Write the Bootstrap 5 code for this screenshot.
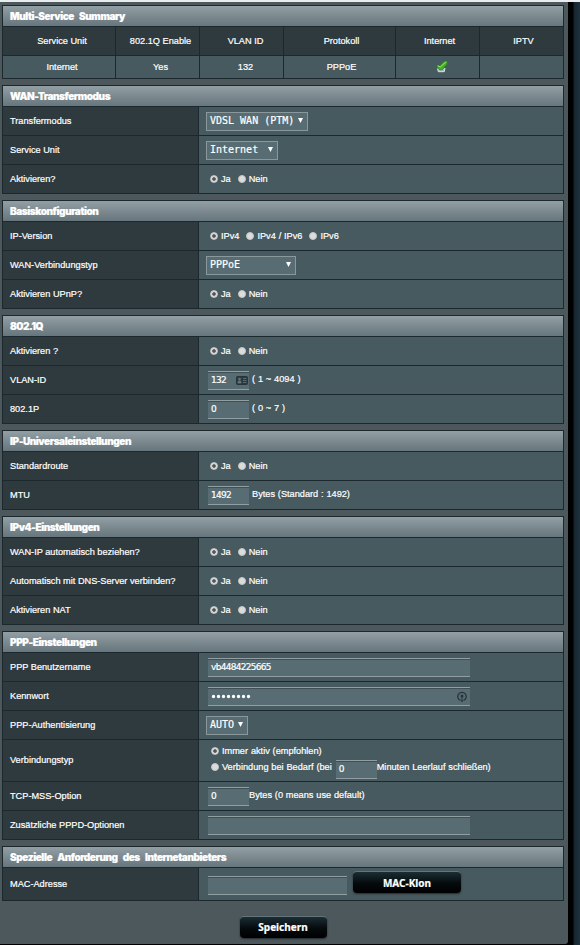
<!DOCTYPE html>
<html lang="de">
<head>
    <meta charset="utf-8">
    <title>WAN - Internetverbindung</title>
    <link href="https://cdn.jsdelivr.net/npm/bootstrap@5.3.0/dist/css/bootstrap.min.css" rel="stylesheet">
    <style>
        body {
            background: linear-gradient(90deg, #000 573px, #16242e 574px, #1f313e 580px);
            border-top: 2px solid #e9ecee;
            height: 945px;
            overflow: hidden;
            font: 9.2px/14px "Liberation Sans", Arial, sans-serif;
            -webkit-text-stroke: .2px #fff;
            color: #fff;
        }
        .panel { width: 568px; height: 942px; background: #4d585c; padding: 3px 4px 0 2px; border-radius: 0 0 3px 0; }
        .section { border: 1px solid #1b282d; border-bottom: 0; margin-bottom: 6px; }
        .section-head {
            height: 21px;
            padding: 3px 7px 0;
            border-bottom: 1px solid #1b282d;
            background: linear-gradient(#929fa5, #67767c);
            font: 900 10px/14px Inter, sans-serif;
            letter-spacing: -.42px;
            word-spacing: 3.5px;
            white-space: nowrap;
        }
        .line { height: 29px; border-bottom: 1px solid #1b282d; background: #475a5f; white-space: nowrap; }
        .line-key { width: 196px; flex: none; padding: 0 7px 1px; background: #2f3a3e; border-right: 1px solid #1b282d; }
        .line-val { padding-left: 7px; word-spacing: .3px; }
        .line-tall { height: 42px; }
        .line-mac { height: 33px; }

        .sum > div { flex: none; border-right: 1px solid #1b282d; padding-bottom: 1px; }
        .sum > div:last-child { border-right: 0; }
        .sum-head { background: #2f3a3e; }
        .sum-row { height: 23px; }
        .c1 { width: 113px; padding-left: 6px; }
        .c2, .c3, .c5 { width: 84px; }
        .c2 { padding-left: 6px; }
        .c4 { width: 112px; }
        .c6 { width: 83px; }

        .radio { width: 8px; height: 8px; flex: none; border-radius: 50%; background: #dcdcdc; border: 1px solid #c3c6c7; margin-right: 3px; }
        .radio.on { background: radial-gradient(circle, #555 1.4px, #dcdcdc 2.2px); }
        .opts { padding: 0 0 1px 4px; }
        .opts span { margin-right: 7px; }
        .opts-second { margin-top: 2px; }
        .opts-second .radio { margin-top: 3px; }
        .opts-second .inp { margin: 0 0 0 4px; }

        .sel { height: 19px; background: #576d73; border: 1px solid #8a979b; padding: 0 4px 1px 3px; font: 10px/16px "DejaVu Sans Mono", monospace; word-spacing: 0; }
        .sel svg { margin-bottom: 1px; }
        .inp {
            height: 19px;
            background: #576d73;
            border: 1px solid #929ea1;
            border-width: 1px 0;
            box-shadow: inset 0 1px #3f4f54;
            margin-left: 2px;
            padding-left: 3px;
            font: 9px/17px "DejaVu Sans", sans-serif;
            letter-spacing: -.7px;
        }
        .w-s { width: 41px; }
        .w-m { width: 139px; }
        .w-l { width: 262px; }
        .note { margin-left: 3px; padding-bottom: 3px; }

        .knob {
            height: 22px;
            border-radius: 4px;
            background: linear-gradient(#1b2d34, #050a0c 55%, #000);
            border-top: 1px solid #64757b;
            box-shadow: 0 1px 2px #222c30;
            font: bold 10px/21px "Noto Sans", sans-serif;
            text-align: center;
        }
        .mac { width: 108px; margin: 3px 0 0 6px; line-height: 23px; }
        .save { width: 87px; margin-top: 9px; }
    </style>
</head>
<body>
    <div class="panel">
        <div class="section">
            <div class="section-head">Multi-Service Summary</div>
            <div class="line sum sum-head d-flex align-items-stretch">
                <div class="c1 d-flex align-items-center justify-content-center">Service Unit</div>
                <div class="c2 d-flex align-items-center justify-content-center">802.1Q Enable</div>
                <div class="c3 d-flex align-items-center justify-content-center ps-2">VLAN ID</div>
                <div class="c4 d-flex align-items-center justify-content-center ps-1">Protokoll</div>
                <div class="c5 d-flex align-items-center justify-content-center ps-1">Internet</div>
                <div class="c6 d-flex align-items-center justify-content-center ps-1">IPTV</div>
            </div>
            <div class="line sum sum-row d-flex align-items-stretch">
                <div class="c1 d-flex align-items-center justify-content-center">Internet</div>
                <div class="c2 d-flex align-items-center justify-content-center">Yes</div>
                <div class="c3 d-flex align-items-center justify-content-center ps-2">132</div>
                <div class="c4 d-flex align-items-center justify-content-center ps-1">PPPoE</div>
                <div class="c5 d-flex align-items-center justify-content-center ps-2">
                    <svg width="12" height="13" viewBox="0 0 12 13">
                        <path d="M1.500 8.500l.8 3.200h6L9 8" fill="#9fb8ba" stroke="#d3e4e2"/>
                        <path d="M.8 4.800l3 .9L8 1.500l3.300-.6v3L6.500 9.500 4 10 1.200 7.500z" fill="#43ad2a" stroke="#237a1c" stroke-width=".6"/>
                        <path d="M1.800 5.700l2.500 1.300L10.200 1.700" fill="none" stroke="#9aec6c"/>
                    </svg>
                </div>
                <div class="c6"></div>
            </div>
        </div>

        <div class="section">
            <div class="section-head">WAN-Transfermodus</div>
            <div class="line d-flex">
                <div class="line-key d-flex align-items-center">Transfermodus</div>
                <div class="line-val d-flex align-items-center">
                    <div class="sel d-flex align-items-center justify-content-between" style="width:102px">VDSL WAN (PTM)<svg width="5" height="5"><path d="M0 0h5L2.500 5z" fill="#fff"/></svg></div>
                </div>
            </div>
            <div class="line d-flex">
                <div class="line-key d-flex align-items-center">Service Unit</div>
                <div class="line-val d-flex align-items-center">
                    <div class="sel d-flex align-items-center justify-content-between" style="width:72px">Internet<svg width="5" height="5"><path d="M0 0h5L2.500 5z" fill="#fff"/></svg></div>
                </div>
            </div>
            <div class="line d-flex">
                <div class="line-key d-flex align-items-center">Aktivieren?</div>
                <div class="line-val d-flex align-items-center">
                    <div class="opts d-flex align-items-center"><i class="radio on"></i><span>Ja</span><i class="radio"></i><span>Nein</span></div>
                </div>
            </div>
        </div>

        <div class="section">
            <div class="section-head">Basiskonfiguration</div>
            <div class="line d-flex">
                <div class="line-key d-flex align-items-center">IP-Version</div>
                <div class="line-val d-flex align-items-center">
                    <div class="opts d-flex align-items-center"><i class="radio on"></i><span>IPv4</span><i class="radio"></i><span>IPv4 / IPv6</span><i class="radio"></i><span>IPv6</span></div>
                </div>
            </div>
            <div class="line d-flex">
                <div class="line-key d-flex align-items-center">WAN-Verbindungstyp</div>
                <div class="line-val d-flex align-items-center">
                    <div class="sel d-flex align-items-center justify-content-between" style="width:90px">PPPoE<svg width="5" height="5"><path d="M0 0h5L2.500 5z" fill="#fff"/></svg></div>
                </div>
            </div>
            <div class="line d-flex">
                <div class="line-key d-flex align-items-center">Aktivieren UPnP?</div>
                <div class="line-val d-flex align-items-center">
                    <div class="opts d-flex align-items-center"><i class="radio on"></i><span>Ja</span><i class="radio"></i><span>Nein</span></div>
                </div>
            </div>
        </div>

        <div class="section">
            <div class="section-head">802.1Q</div>
            <div class="line d-flex">
                <div class="line-key d-flex align-items-center">Aktivieren ?</div>
                <div class="line-val d-flex align-items-center">
                    <div class="opts d-flex align-items-center"><i class="radio on"></i><span>Ja</span><i class="radio"></i><span>Nein</span></div>
                </div>
            </div>
            <div class="line d-flex">
                <div class="line-key d-flex align-items-center">VLAN-ID</div>
                <div class="line-val d-flex align-items-center">
                    <div class="inp w-s d-flex align-items-center justify-content-between">132
                        <svg width="13" height="9" viewBox="0 0 13 9"><rect x=".5" y=".5" width="11" height="8" rx="1" fill="#2b383c" stroke="#27343a"/><path d="M2 7V5.500h3V7zM2.800 2.200h1.500v2H2.800zM7 2.500h3.500M7 4.500h3.500M7 6.500h3.500" fill="#62777d" stroke="#62777d" stroke-width=".8"/></svg>
                    </div>
                    <div class="note">( 1 ~ 4094 )</div>
                </div>
            </div>
            <div class="line d-flex">
                <div class="line-key d-flex align-items-center">802.1P</div>
                <div class="line-val d-flex align-items-center">
                    <div class="inp w-s">0</div>
                    <div class="note">( 0 ~ 7 )</div>
                </div>
            </div>
        </div>

        <div class="section">
            <div class="section-head">IP-Universaleinstellungen</div>
            <div class="line d-flex">
                <div class="line-key d-flex align-items-center">Standardroute</div>
                <div class="line-val d-flex align-items-center">
                    <div class="opts d-flex align-items-center"><i class="radio on"></i><span>Ja</span><i class="radio"></i><span>Nein</span></div>
                </div>
            </div>
            <div class="line d-flex">
                <div class="line-key d-flex align-items-center">MTU</div>
                <div class="line-val d-flex align-items-center">
                    <div class="inp w-s">1492</div>
                    <div class="note">Bytes (Standard : 1492)</div>
                </div>
            </div>
        </div>

        <div class="section">
            <div class="section-head">IPv4-Einstellungen</div>
            <div class="line d-flex">
                <div class="line-key d-flex align-items-center">WAN-IP automatisch beziehen?</div>
                <div class="line-val d-flex align-items-center">
                    <div class="opts d-flex align-items-center"><i class="radio on"></i><span>Ja</span><i class="radio"></i><span>Nein</span></div>
                </div>
            </div>
            <div class="line d-flex">
                <div class="line-key d-flex align-items-center">Automatisch mit DNS-Server verbinden?</div>
                <div class="line-val d-flex align-items-center">
                    <div class="opts d-flex align-items-center"><i class="radio on"></i><span>Ja</span><i class="radio"></i><span>Nein</span></div>
                </div>
            </div>
            <div class="line d-flex">
                <div class="line-key d-flex align-items-center">Aktivieren NAT</div>
                <div class="line-val d-flex align-items-center">
                    <div class="opts d-flex align-items-center"><i class="radio on"></i><span>Ja</span><i class="radio"></i><span>Nein</span></div>
                </div>
            </div>
        </div>

        <div class="section">
            <div class="section-head">PPP-Einstellungen</div>
            <div class="line d-flex">
                <div class="line-key d-flex align-items-center">PPP Benutzername</div>
                <div class="line-val d-flex align-items-center"><div class="inp w-l">vb4484225665</div></div>
            </div>
            <div class="line d-flex">
                <div class="line-key d-flex align-items-center">Kennwort</div>
                <div class="line-val d-flex align-items-center">
                    <div class="inp w-l d-flex align-items-center justify-content-between">
                        <svg width="42" height="5"><path d="M2.500 2.500h36" stroke="#fff" stroke-width="3.400" stroke-linecap="round" stroke-dasharray="0 5"/></svg>
                        <svg width="10" height="11" viewBox="0 0 10 11" style="margin-right:3px"><path d="M3 9.200A4.200 4.200 0 1 1 7 9.200" fill="none" stroke="#27353a" stroke-width="1.300"/><circle cx="5" cy="5" r="1.500" fill="#27353a"/><path d="M5 5v6M3 8.500l2 2 2-2" fill="none" stroke="#27353a"/></svg>
                    </div>
                </div>
            </div>
            <div class="line d-flex">
                <div class="line-key d-flex align-items-center">PPP-Authentisierung</div>
                <div class="line-val d-flex align-items-center">
                    <div class="sel d-flex align-items-center justify-content-between" style="width:42px">AUTO<svg width="5" height="5"><path d="M0 0h5L2.500 5z" fill="#fff"/></svg></div>
                </div>
            </div>
            <div class="line line-tall d-flex">
                <div class="line-key d-flex align-items-center">Verbindungstyp</div>
                <div class="line-val ps-2 d-flex flex-column">
                    <div class="opts pt-1 pb-0 d-flex align-items-center"><i class="radio on"></i><span>Immer aktiv (empfohlen)</span></div>
                    <div class="opts opts-second d-flex align-items-start"><i class="radio"></i>Verbindung bei Bedarf (bei <div class="inp w-s">0</div>Minuten Leerlauf schließen)</div>
                </div>
            </div>
            <div class="line d-flex">
                <div class="line-key d-flex align-items-center">TCP-MSS-Option</div>
                <div class="line-val d-flex align-items-center">
                    <div class="inp w-s">0</div>
                    <div class="note ms-0">Bytes (0 means use default)</div>
                </div>
            </div>
            <div class="line d-flex">
                <div class="line-key d-flex align-items-center">Zusätzliche PPPD-Optionen</div>
                <div class="line-val d-flex align-items-center"><div class="inp w-l"></div></div>
            </div>
        </div>

        <div class="section">
            <div class="section-head">Spezielle Anforderung des Internetanbieters</div>
            <div class="line line-mac d-flex">
                <div class="line-key d-flex align-items-center">MAC-Adresse</div>
                <div class="line-val d-flex align-items-start">
                    <div class="inp w-m mt-2"></div>
                    <div class="knob mac">MAC-Klon</div>
                </div>
            </div>
        </div>

        <div class="d-flex justify-content-center">
            <div class="knob save">Speichern</div>
        </div>
    </div>
    <script src="https://cdn.jsdelivr.net/npm/bootstrap@5.3.0/dist/js/bootstrap.bundle.min.js"></script>
</body>
</html>
